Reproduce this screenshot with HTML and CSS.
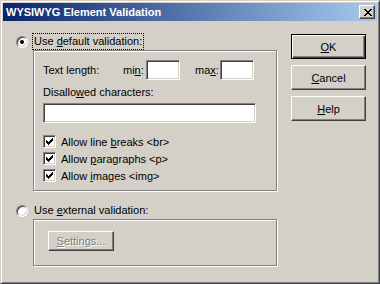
FILE: index.html
```html
<!DOCTYPE html>
<html lang="en">
<head>
  <meta charset="UTF-8">
  <title>WYSIWYG Element Validation</title>
  <link rel="stylesheet" href="styles.css">
</head>
<body>

  <div class="window">
    <div class="titlebar">
      <span class="title">WYSIWYG Element Validation</span>
      <span class="close">
        <svg width="8" height="7" viewBox="0 0 8 7">
          <path d="M0 0h2v1H0zM6 0h2v1H6zM1 1h2v1H1zM5 1h2v1H5zM2 2h4v1H2zM3 3h2v1H3zM2 4h4v1H2zM1 5h2v1H1zM5 5h2v1H5zM0 6h2v1H0zM6 6h2v1H6z" fill="#000"/>
        </svg>
      </span>
    </div>

    <div class="content">
      <div class="options">
        <div class="choice">
          <span class="radio checked"></span>
          <span class="label focus">Use <u>d</u>efault validation:</span>
        </div>

        <div class="group group-main">
          <div class="length-row">
            <span class="length-label">Text length:</span>
            <span class="minmax">mi<u>n</u>:</span>
            <span class="field small"></span>
            <span class="minmax max">ma<u>x</u>:</span>
            <span class="field small"></span>
          </div>
          <div class="caption">Disallo<u>w</u>ed characters:</div>
          <div class="field wide"></div>

          <div class="checks">
            <div class="check-row">
              <span class="checkbox"><svg width="7" height="7" viewBox="0 0 7 7"><path d="M0 2h1v3H0zM1 3h1v3H1zM2 4h1v3H2zM3 3h1v3H3zM4 2h1v3H4zM5 1h1v3H5zM6 0h1v3H6z" fill="#000"/></svg></span>
              <span>Allow line <u>b</u>reaks &lt;br&gt;</span>
            </div>
            <div class="check-row">
              <span class="checkbox"><svg width="7" height="7" viewBox="0 0 7 7"><path d="M0 2h1v3H0zM1 3h1v3H1zM2 4h1v3H2zM3 3h1v3H3zM4 2h1v3H4zM5 1h1v3H5zM6 0h1v3H6z" fill="#000"/></svg></span>
              <span>Allow <u>p</u>aragraphs &lt;p&gt;</span>
            </div>
            <div class="check-row">
              <span class="checkbox"><svg width="7" height="7" viewBox="0 0 7 7"><path d="M0 2h1v3H0zM1 3h1v3H1zM2 4h1v3H2zM3 3h1v3H3zM4 2h1v3H4zM5 1h1v3H5zM6 0h1v3H6z" fill="#000"/></svg></span>
              <span>Allow <u>i</u>mages &lt;img&gt;</span>
            </div>
          </div>
        </div>

        <div class="choice second">
          <span class="radio"></span>
          <span class="label">Use <u>e</u>xternal validation:</span>
        </div>

        <div class="group group-ext">
          <button class="button settings" disabled><u>S</u>ettings...</button>
        </div>
      </div>

      <div class="actions">
        <button class="button default"><u>O</u>K</button>
        <button class="button"><u>C</u>ancel</button>
        <button class="button"><u>H</u>elp</button>
      </div>
    </div>
  </div>

</body>
</html>
```

FILE: styles.css
```css
body {
  margin: 0;
  background: #d4d0c8;
  font-family: "Liberation Sans", Arial, sans-serif;
  font-size: 11px;
  color: #000;
}

.window {
  width: 380px;
  height: 284px;
  box-sizing: border-box;
  padding: 2px;
  background: #d4d0c8;
  border: 1px solid;
  border-color: #d4d0c8 #404040 #404040 #d4d0c8;
  box-shadow: inset 1px 1px #fff, inset -1px -1px #808080;
}

/* barre de titre */
.titlebar {
  height: 18px;
  display: flex;
  align-items: center;
  justify-content: space-between;
  padding: 0 2px 0 3px;
  background: linear-gradient(to right, #0a246a, #a6caf0);
  color: #fff;
  font-weight: bold;
}

.close {
  width: 16px;
  height: 14px;
  box-sizing: border-box;
  display: flex;
  align-items: center;
  justify-content: center;
  padding-left: 1px;
  background: #d4d0c8;
  border: 1px solid;
  border-color: #fff #404040 #404040 #fff;
  box-shadow: inset -1px -1px #808080;
}

.content {
  display: flex;
  padding: 12px 0 0 13px;
}

.options {
  width: 262px;
}

.choice {
  display: flex;
  align-items: center;
  height: 17px;
}

.choice.second {
  margin-top: 11px;
}

.radio {
  position: relative;
  width: 12px;
  height: 12px;
  box-sizing: border-box;
  margin-right: 4px;
  border-radius: 50%;
  background: #fff;
  border: 1px solid;
  border-color: #808080 #fff #fff #808080;
  box-shadow: inset 1px 1px #404040, inset -1px -1px #d4d0c8;
}

.radio.checked::after {
  content: "";
  position: absolute;
  left: 3px;
  top: 3px;
  width: 4px;
  height: 4px;
  border-radius: 50%;
  background: #000;
}

.label {
  line-height: 15px;
  padding: 0 1px;
  border: 1px dotted transparent;
}

.label.focus {
  border-color: #000;
}

/* cadres */
.group {
  margin-left: 17px;
  width: 244px;
  box-sizing: border-box;
  border: 1px solid #808080;
  box-shadow: inset 1px 1px #fff, 1px 1px #fff;
}

.group-main {
  height: 141px;
  padding: 9px 0 0 9px;
}

.group-ext {
  height: 47px;
  padding: 11px 0 0 14px;
}

.length-row {
  display: flex;
  align-items: center;
  height: 20px;
}

.length-label {
  width: 80px;
}

.minmax {
  width: 23px;
}

.minmax.max {
  width: 25px;
  margin-left: 15px;
}

.field {
  display: block;
  height: 20px;
  box-sizing: border-box;
  background: #fff;
  border: 1px solid;
  border-color: #808080 #fff #fff #808080;
  box-shadow: inset 1px 1px #404040, inset -1px -1px #d4d0c8;
}

.field.small {
  width: 34px;
}

.field.wide {
  width: 213px;
}

.caption {
  margin-top: 6px;
  line-height: 13px;
  margin-bottom: 4px;
}

.checks {
  margin-top: 10px;
}

.check-row {
  display: flex;
  align-items: center;
  height: 17px;
}

.checkbox {
  width: 13px;
  height: 13px;
  box-sizing: border-box;
  margin-right: 5px;
  padding: 2px 0 0 2px;
  background: #fff;
  border: 1px solid;
  border-color: #808080 #fff #fff #808080;
  box-shadow: inset 1px 1px #404040, inset -1px -1px #d4d0c8;
}

.checkbox svg {
  display: block;
}

/* boutons */
.actions {
  display: flex;
  flex-direction: column;
  gap: 6px;
  margin-left: 13px;
  padding-top: 1px;
}

.button {
  width: 75px;
  height: 25px;
  padding: 0;
  margin: 0;
  font: inherit;
  color: #000;
  background: #d4d0c8;
  border: 1px solid;
  border-color: #fff #404040 #404040 #fff;
  border-radius: 0;
  box-shadow: inset -1px -1px #808080;
}

.button.default {
  border-color: #000;
  box-shadow: inset 1px 1px #fff, inset -1px -1px #404040, inset -2px -2px #808080;
}

.button.settings {
  width: 66px;
  height: 20px;
  color: #808080;
  text-shadow: 1px 1px #fff;
}
```
